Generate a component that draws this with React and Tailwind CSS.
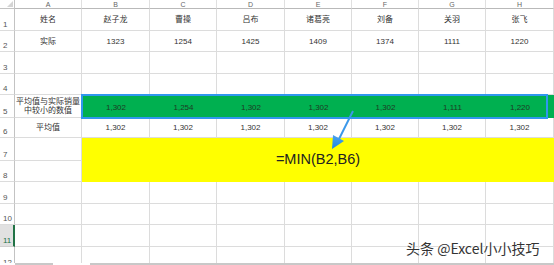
import React from 'react';

const COLS = ['A', 'B', 'C', 'D', 'E', 'F', 'G', 'H'];
const NAMES = ['赵子龙', '曹操', '吕布', '诸葛亮', '刘备', '关羽', '张飞'];
const ACTUAL = [1323, 1254, 1425, 1409, 1374, 1111, 1220];
const AVG = 1302;

const fmt = (n) => n.toLocaleString('en-US');

function Cell({ children, className = '' }) {
  return (
    <div
      className={`box-border flex items-center justify-center border-r border-b border-[#dcdcdc] text-[8px] leading-[9px] text-[#333] text-center ${className}`}
    >
      {children}
    </div>
  );
}

function RowHead({ n, active = false }) {
  return (
    <div
      className={`box-border flex items-end pb-[1px] pl-[3px] border-b text-[8px] leading-[9px] ${
        active
          ? 'bg-[#e1e1e1] text-[#217346] border-r-2 border-r-[#217346] border-b-[#cfcfcf]'
          : 'border-r border-r-[#c3c3c3] border-b-[#dcdcdc] text-[#555]'
      }`}
    >
      {n}
    </div>
  );
}

export default function App() {
  return (
    <div className="relative w-[554px] h-[265px] overflow-hidden bg-white font-['Liberation_Sans','Noto_Sans_CJK_SC',sans-serif]">
      <div className="h-[263px] overflow-hidden">
        <div className="grid grid-cols-[15px_67px_68px_67px_68px_67px_67px_67px_68px] grid-rows-[9px_22px_21px_22px_21px_23px_20px_23px_21px_22px_21px_22px_22px]">
          {/* column headers */}
          <div className="relative box-border border-r border-b border-[#c3c3c3]">
            <div className="absolute right-[1px] bottom-[1px] w-0 h-0 border-l-[6px] border-l-transparent border-b-[6px] border-b-[#d4d4d4]" />
          </div>
          {COLS.map((c) => (
            <div
              key={c}
              className="box-border flex items-center justify-center border-r border-r-[#e0e0e0] border-b border-b-[#b9b9b9] text-[7px] leading-none text-[#666]"
            >
              {c}
            </div>
          ))}

          {/* row 1 */}
          <RowHead n={1} />
          <Cell>姓名</Cell>
          {NAMES.map((n) => (
            <Cell key={n}>{n}</Cell>
          ))}

          {/* row 2 */}
          <RowHead n={2} />
          <Cell>实际</Cell>
          {ACTUAL.map((v, i) => (
            <Cell key={i}>{v}</Cell>
          ))}

          {/* rows 3-4 */}
          {[3, 4].map((r) => (
            <React.Fragment key={r}>
              <RowHead n={r} />
              {COLS.map((c) => (
                <Cell key={c} />
              ))}
            </React.Fragment>
          ))}

          {/* row 5 */}
          <RowHead n={5} />
          <Cell className="flex-col">
            <span>平均值与实际销量</span>
            <span>中较小的数值</span>
          </Cell>
          {ACTUAL.map((v, i) => (
            <div
              key={i}
              className="box-border flex items-center justify-center pt-[3px] bg-[#00b050] text-[8px] text-[#1d3b24]"
            >
              {fmt(Math.min(v, AVG))}
            </div>
          ))}

          {/* row 6 */}
          <RowHead n={6} />
          <Cell>平均值</Cell>
          {ACTUAL.map((_, i) => (
            <Cell key={i}>{fmt(AVG)}</Cell>
          ))}

          {/* rows 7-8, B:H merged */}
          <RowHead n={7} />
          <Cell />
          <div className="col-span-7 row-span-2 flex items-center justify-center bg-[#ffff00] text-[14.5px] text-[#222]">
            =MIN(B2,B6)
          </div>
          <RowHead n={8} />
          <Cell />

          {/* rows 9-12 */}
          {[9, 10, 11, 12].map((r) => (
            <React.Fragment key={r}>
              <RowHead n={r} active={r === 11} />
              {COLS.map((c) => (
                <Cell key={c} />
              ))}
            </React.Fragment>
          ))}
        </div>
      </div>

      {/* scrollbar edge */}
      <div className="flex h-[2px]">
        <div className="w-[15px]" />
        <div className="w-[38px] bg-[#c8c8c8]" />
        <div className="w-[37px]" />
        <div className="flex-1 bg-[#c8c8c8]" />
      </div>

      {/* selection border */}
      <div className="absolute left-[81px] top-[94px] w-[467px] h-[25px] border-2 border-[#3097ee]" />

      {/* arrow */}
      <svg className="absolute left-0 top-0" width="554" height="265" viewBox="0 0 554 265">
        <defs>
          <linearGradient id="arr" x1="0" y1="0" x2="0" y2="1">
            <stop offset="0" stopColor="#4aa3f0" />
            <stop offset="1" stopColor="#1e86e0" />
          </linearGradient>
        </defs>
        <line x1="353" y1="111" x2="339" y2="139" stroke="#3b98ea" strokeWidth="2" />
        <polygon points="332,149 333,135 344,141" fill="url(#arr)" />
      </svg>

      {/* watermark */}
      <div className="absolute left-[406px] top-[239px] text-[14px] leading-[18px] text-[#333] [text-shadow:0_0_2px_#fff,0_0_2px_#fff] font-['Noto_Sans_CJK_SC',sans-serif] whitespace-nowrap">
        头条 @Excel小小技巧
      </div>
    </div>
  );
}
